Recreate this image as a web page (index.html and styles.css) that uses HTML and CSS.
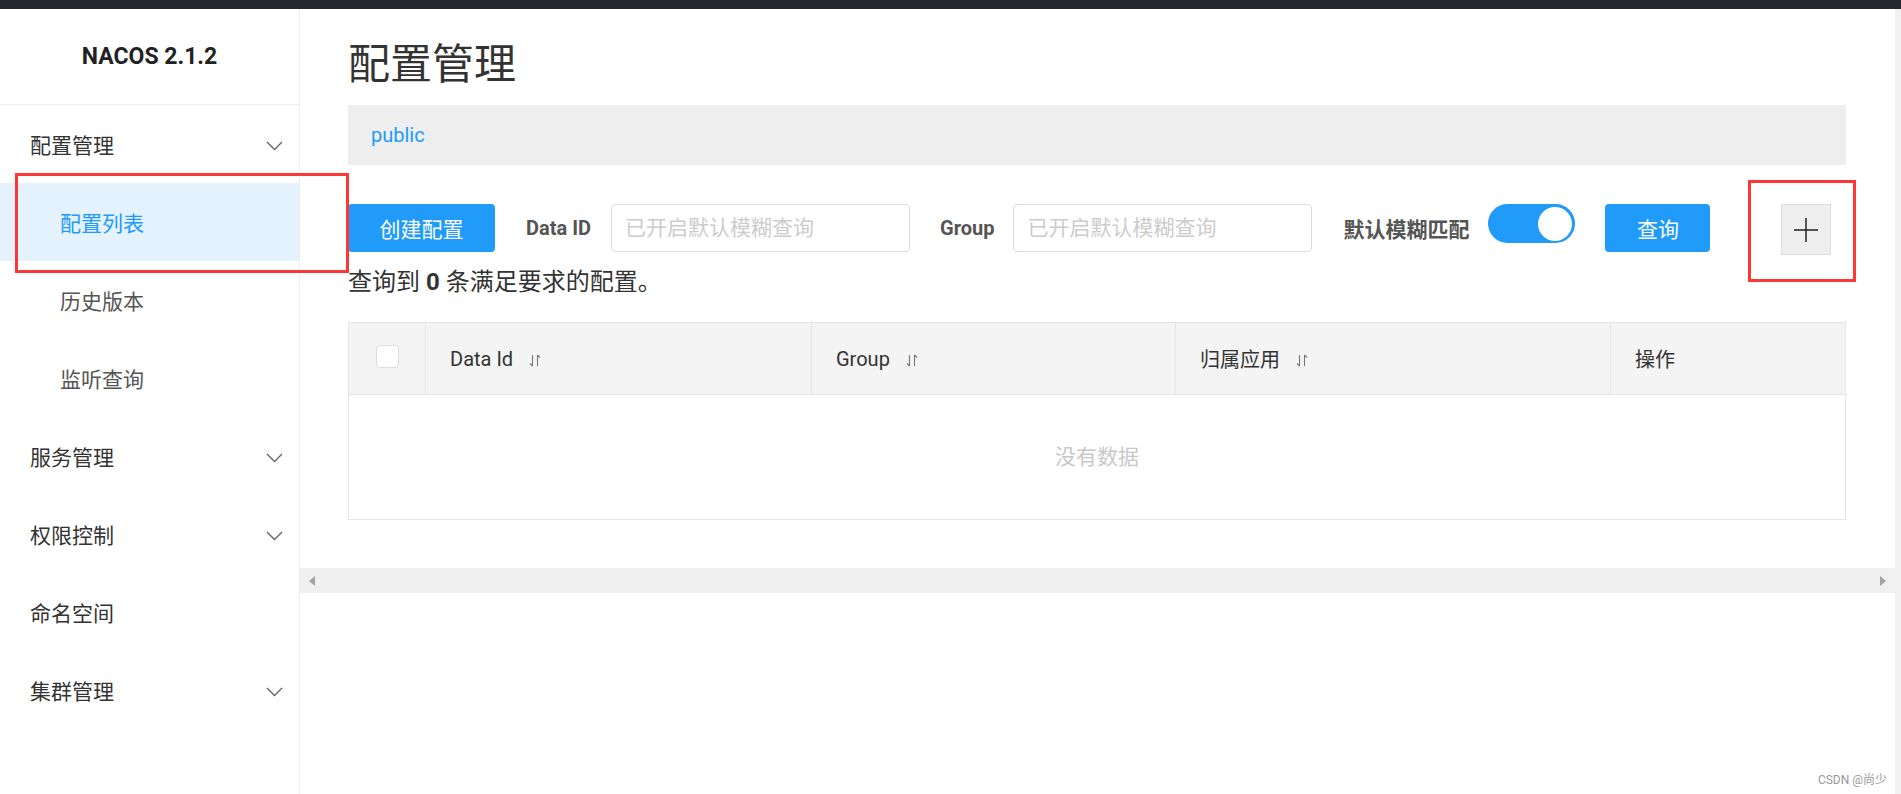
FILE: index.html
```html
<!DOCTYPE html>
<html lang="zh-CN">
<head>
    <meta charset="UTF-8">
    <meta name="viewport" content="width=device-width, initial-scale=1.0">
    <title>Nacos - 配置管理</title>
    <link rel="stylesheet" href="styles.css">
</head>
<body>
    <div class="topbar"></div>
    <div class="layout">
        <aside class="sidebar">
            <div class="logo">NACOS 2.1.2</div>
            <nav class="menu">
                <div class="menu-item">
                    <span>配置管理</span>
                    <svg class="chevron" width="17" height="10" viewBox="0 0 17 10"><path d="M1 1l7.5 7.5L16 1"/></svg>
                </div>
                <div class="menu-item sub active"><span>配置列表</span></div>
                <div class="menu-item sub"><span>历史版本</span></div>
                <div class="menu-item sub"><span>监听查询</span></div>
                <div class="menu-item">
                    <span>服务管理</span>
                    <svg class="chevron" width="17" height="10" viewBox="0 0 17 10"><path d="M1 1l7.5 7.5L16 1"/></svg>
                </div>
                <div class="menu-item">
                    <span>权限控制</span>
                    <svg class="chevron" width="17" height="10" viewBox="0 0 17 10"><path d="M1 1l7.5 7.5L16 1"/></svg>
                </div>
                <div class="menu-item"><span>命名空间</span></div>
                <div class="menu-item">
                    <span>集群管理</span>
                    <svg class="chevron" width="17" height="10" viewBox="0 0 17 10"><path d="M1 1l7.5 7.5L16 1"/></svg>
                </div>
            </nav>
        </aside>

        <main class="main">
            <div class="content">
                <h1 class="page-title">配置管理</h1>
                <div class="ns-bar"><span class="ns-link">public</span></div>

                <div class="toolbar">
                    <button class="btn btn-primary btn-create">创建配置</button>
                    <label class="field-label label-dataid">Data ID</label>
                    <input class="search-input" type="text" placeholder="已开启默认模糊查询">
                    <label class="field-label label-group">Group</label>
                    <input class="search-input" type="text" placeholder="已开启默认模糊查询">
                    <label class="field-label label-fuzzy">默认模糊匹配</label>
                    <div class="switch"><span class="knob"></span></div>
                    <button class="btn btn-primary btn-query">查询</button>
                    <button class="btn-plus">
                        <svg width="24" height="24" viewBox="0 0 24 24"><path d="M12 0v24M0 12h24"/></svg>
                    </button>
                </div>

                <div class="result-count">查询到 <b>0</b> 条满足要求的配置。</div>

                <div class="table">
                    <div class="table-head">
                        <div class="th th-check"><span class="checkbox"></span></div>
                        <div class="th">Data Id <svg class="sort" width="12" height="13" viewBox="0 0 12 13"><path d="M3.5 1v11M3.5 12L1 9.5M8.5 12V1M8.5 1L11 3.5"/></svg></div>
                        <div class="th">Group <svg class="sort" width="12" height="13" viewBox="0 0 12 13"><path d="M3.5 1v11M3.5 12L1 9.5M8.5 12V1M8.5 1L11 3.5"/></svg></div>
                        <div class="th">归属应用 <svg class="sort" width="12" height="13" viewBox="0 0 12 13"><path d="M3.5 1v11M3.5 12L1 9.5M8.5 12V1M8.5 1L11 3.5"/></svg></div>
                        <div class="th">操作</div>
                    </div>
                    <div class="table-empty">没有数据</div>
                </div>
            </div>

            <div class="hscroll">
                <span class="arrow arrow-left"></span>
                <span class="arrow arrow-right"></span>
            </div>
        </main>

        <div class="vscroll"></div>
    </div>

    <div class="mark mark-menu"></div>
    <div class="mark mark-plus"></div>
    <div class="watermark">CSDN @尚少</div>
</body>
</html>
```

FILE: styles.css
```css
body {
    margin: 0;
    font-family: Roboto, "Noto Sans CJK SC", sans-serif;
    font-size: 21px;
    color: #333;
    background: #fff;
    height: 794px;
    overflow: hidden;
}
.topbar {
    height: 9px;
    background: #25292e;
}
.layout {
    display: flex;
    height: 785px;
}

/* sidebar */
.sidebar {
    width: 300px;
    flex-shrink: 0;
    box-sizing: border-box;
    border-right: 1px solid #eee;
}
.logo {
    height: 95px;
    line-height: 95px;
    border-bottom: 1px solid #eee;
    text-align: center;
    font-weight: bold;
    font-size: 23px;
    color: #222;
}
.menu-item {
    height: 78px;
    box-sizing: border-box;
    display: flex;
    align-items: center;
    justify-content: space-between;
    padding: 3px 16px 0 30px;
    line-height: 30px;
    color: #333;
}
.menu-item.sub {
    padding-left: 60px;
    color: #555;
}
.menu-item.active {
    background: #e4f2fd;
    color: #209bfa;
}
.chevron path {
    fill: none;
    stroke: #666;
    stroke-width: 1.4;
}

/* main */
.main {
    flex: 1;
    min-width: 0;
    display: flex;
    flex-direction: column;
}
.content {
    padding: 26px 49px 0 48px;
}
.page-title {
    margin: 0;
    font-size: 42px;
    font-weight: normal;
    line-height: 60px;
    color: #333;
}
.ns-bar {
    margin-top: 10px;
    height: 60px;
    line-height: 60px;
    background: #eee;
    padding-left: 23px;
}
.ns-link {
    color: #209bfa;
    font-size: 20px;
}

.toolbar {
    margin-top: 39px;
    height: 48px;
    display: flex;
    align-items: center;
}
.btn {
    font-family: inherit;
    font-size: 21px;
    border: none;
    border-radius: 4px;
    height: 48px;
    padding: 0;
    cursor: pointer;
}
.btn-primary {
    background: #209bfa;
    color: #fff;
}
.btn-create {
    width: 147px;
}
.btn-query {
    width: 105px;
    margin-left: 30px;
}
.field-label {
    font-weight: bold;
    color: #555;
    font-size: 20px;
}
.label-dataid {
    margin: 0 20px 0 31px;
}
.label-group {
    margin: 0 19px 0 30px;
}
.label-fuzzy {
    margin: 0 19px 0 31px;
    font-size: 21px;
}
.search-input {
    width: 299px;
    height: 48px;
    box-sizing: border-box;
    border: 1px solid #ddd;
    border-radius: 4px;
    padding: 0 13px;
    font-family: inherit;
    font-size: 21px;
    color: #333;
    outline: none;
}
.search-input::placeholder {
    color: #ccc;
}
.switch {
    align-self: flex-start;
    width: 87px;
    height: 39px;
    border-radius: 20px;
    background: #209bfa;
    display: flex;
    align-items: center;
    justify-content: flex-end;
    padding-right: 3px;
    box-sizing: border-box;
}
.knob {
    width: 34px;
    height: 34px;
    border-radius: 50%;
    background: #fff;
}
.btn-plus {
    align-self: flex-start;
    margin-left: 71px;
    width: 50px;
    height: 51px;
    padding: 0;
    background: #eee;
    border: 1px solid #ddd;
    display: flex;
    align-items: center;
    justify-content: center;
}
.btn-plus path {
    stroke: #222;
    stroke-width: 1.5;
}

.result-count {
    margin-top: 15px;
    font-size: 24px;
    line-height: 31px;
    color: #333;
}

/* table */
.table {
    margin-top: 24px;
    border: 1px solid #e6e6e6;
}
.table-head {
    display: grid;
    grid-template-columns: 76px 386px 364px 435px 1fr;
    height: 71px;
    background: #f4f4f4;
    border-bottom: 1px solid #e6e6e6;
}
.th {
    display: flex;
    align-items: center;
    padding-left: 24px;
    border-left: 1px solid #e6e6e6;
    font-size: 20px;
    color: #333;
}
.th-check {
    border-left: none;
    padding-left: 0;
    justify-content: center;
}
.checkbox {
    width: 21px;
    height: 21px;
    margin-top: -4px;
    border: 1px solid #ddd;
    border-radius: 4px;
    background: #fff;
}
.sort {
    margin-left: 16px;
    margin-top: 4px;
}
.sort path {
    fill: none;
    stroke: #777;
    stroke-width: 1.1;
}
.table-empty {
    height: 124px;
    box-sizing: border-box;
    padding-bottom: 5px;
    display: flex;
    align-items: center;
    justify-content: center;
    color: #c8c8c8;
    font-size: 21px;
}

/* scrollbars */
.hscroll {
    margin-top: 48px;
    height: 25px;
    background: #f0f0f0;
    display: flex;
    align-items: center;
    justify-content: space-between;
    padding: 0 9px;
}
.arrow {
    width: 0;
    height: 0;
    border-top: 5.5px solid transparent;
    border-bottom: 5.5px solid transparent;
}
.arrow-left {
    border-right: 6px solid #a3a3a3;
}
.arrow-right {
    border-left: 6px solid #a3a3a3;
}
.vscroll {
    width: 6px;
    flex-shrink: 0;
    background: #f1f1f1;
}

/* screenshot annotations */
.mark {
    position: absolute;
    border: 3px solid #ff3636;
    box-sizing: border-box;
    pointer-events: none;
}
.mark-menu {
    left: 15px;
    top: 173px;
    width: 334px;
    height: 100px;
}
.mark-plus {
    left: 1748px;
    top: 180px;
    width: 108px;
    height: 102px;
}
.watermark {
    position: absolute;
    right: 14px;
    bottom: 7px;
    font-size: 12px;
    color: #999;
}
```
